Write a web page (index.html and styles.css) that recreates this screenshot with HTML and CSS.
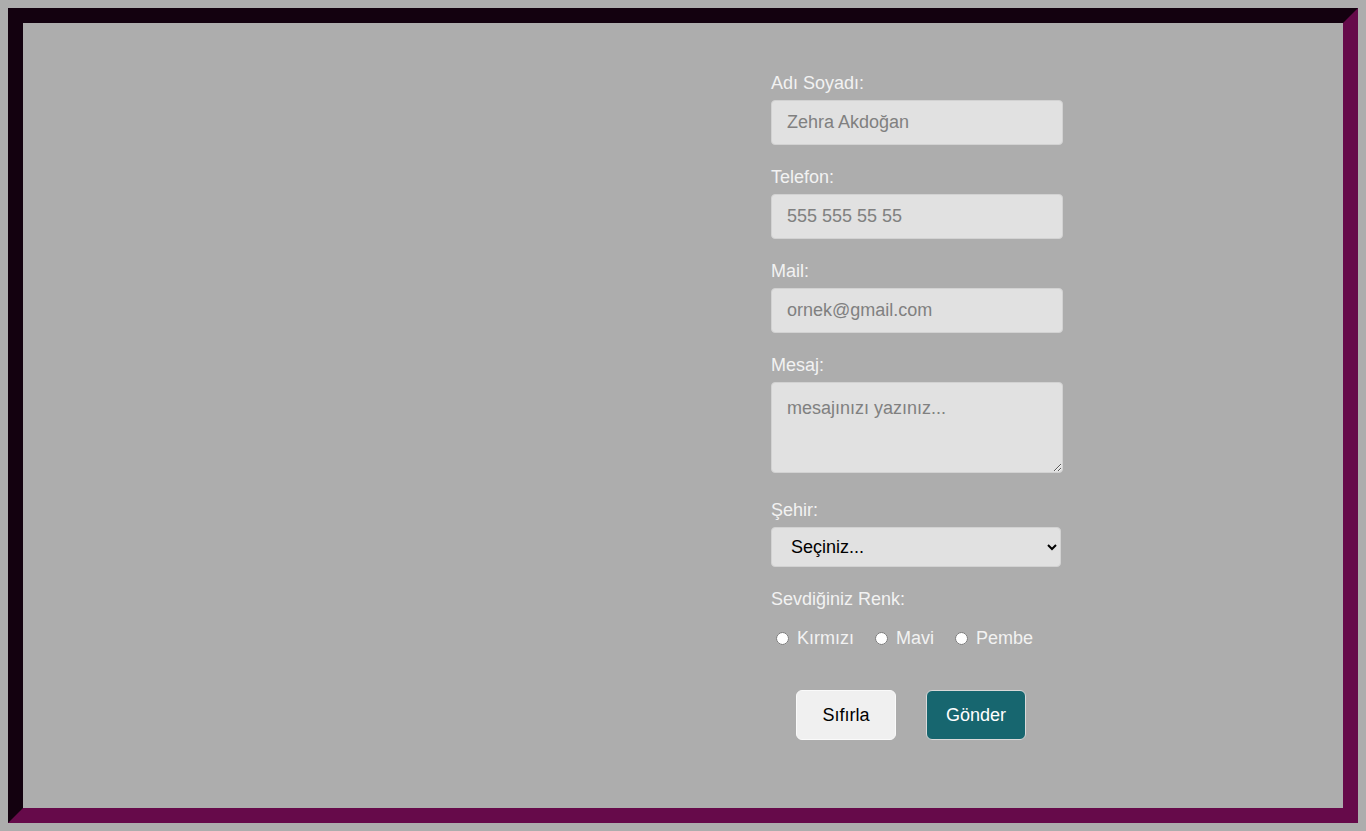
FILE: index.html
```html
<!DOCTYPE html>
<html lang="tr">
<head>
<meta charset="utf-8">
<title>İletişim Formu</title>
<link rel="stylesheet" href="styles.css">
</head>
<body>
<div class="frame">
  <div class="left"></div>
  <form class="form">
    <div class="group">
      <label class="lbl" for="ad">Adı Soyadı:</label>
      <input class="field" id="ad" type="text" placeholder="Zehra Akdoğan">
    </div>
    <div class="group">
      <label class="lbl" for="tel">Telefon:</label>
      <input class="field" id="tel" type="tel" placeholder="555 555 55 55">
    </div>
    <div class="group">
      <label class="lbl" for="mail">Mail:</label>
      <input class="field" id="mail" type="email" placeholder="ornek@gmail.com">
    </div>
    <div class="group group-msg">
      <label class="lbl" for="msg">Mesaj:</label>
      <textarea class="field area" id="msg" placeholder="mesajınızı yazınız..."></textarea>
    </div>
    <div class="group">
      <label class="lbl" for="sehir">Şehir:</label>
      <select class="field select" id="sehir">
        <option>Seçiniz...</option>
        <option>İstanbul</option>
        <option>Ankara</option>
        <option>İzmir</option>
      </select>
    </div>
    <div class="group-radio">
      <span class="lbl">Sevdiğiniz Renk:</span>
      <div class="radios">
        <span class="opt"><input type="radio" name="renk" id="r1"> <label for="r1">Kırmızı</label></span>
        <span class="opt"><input type="radio" name="renk" id="r2"> <label for="r2">Mavi</label></span>
        <span class="opt"><input type="radio" name="renk" id="r3"> <label for="r3">Pembe</label></span>
      </div>
    </div>
    <div class="buttons">
      <button type="reset" class="btn btn-reset">Sıfırla</button>
      <button type="submit" class="btn btn-send">Gönder</button>
    </div>
  </form>
</div>
</body>
</html>
```
FILE: styles.css
```css
html, body {
  height: 100%;
}
body {
  margin: 8px;
  background: #adadad;
  font-family: "Liberation Sans", Arial, sans-serif;
  font-size: 18px;
}
.frame {
  box-sizing: border-box;
  height: calc(100vh - 16px);
  border: 15px solid;
  border-color: #13010f #660a4a #660a4a #13010f;
  background: #adadad;
  display: grid;
  grid-template-columns: 1fr 1fr;
}
.form {
  padding: 50px 0 0 88px;
  width: 292px;
}
.lbl {
  display: block;
  color: #f2f2f2;
  font-size: 18px;
  line-height: 21px;
  margin-bottom: 6px;
}
.group {
  margin-bottom: 22px;
}
.group-msg {
  margin-bottom: 27px;
}
.field {
  display: block;
  box-sizing: border-box;
  width: 292px;
  height: 45px;
  margin: 0;
  padding: 0 15px;
  border: 1px solid #d2d2d2;
  border-radius: 4px;
  background: #e1e1e1;
  font-family: "Liberation Sans", Arial, sans-serif;
  font-size: 18px;
  color: #333;
}
.field::placeholder {
  color: #808080;
}
.area {
  height: 91px;
  padding: 15px;
  resize: vertical;
}
.select {
  width: 290px;
  height: 40px;
  margin-top: 1px;
  padding: 0 12px 0 15px;
  color: #000;
}
.group-radio .lbl {
  margin-bottom: 18px;
}
.radios {
  display: flex;
  color: #f2f2f2;
  font-size: 18px;
  line-height: 21px;
}
.opt {
  margin-right: 16px;
  white-space: pre;
}
.opt input {
  vertical-align: -1px;
}
.buttons {
  display: flex;
  gap: 30px;
  padding-left: 25px;
  margin-top: 41px;
}
.btn {
  box-sizing: border-box;
  width: 100px;
  height: 50px;
  border-radius: 6px;
  font-family: "Liberation Sans", Arial, sans-serif;
  font-size: 18px;
  cursor: pointer;
}
.btn-reset {
  background: #f0f0f0;
  color: #000;
  border: 1px solid #fafafa;
}
.btn-send {
  background: #17666f;
  color: #fff;
  border: 1px solid #d9d9d9;
}
```
